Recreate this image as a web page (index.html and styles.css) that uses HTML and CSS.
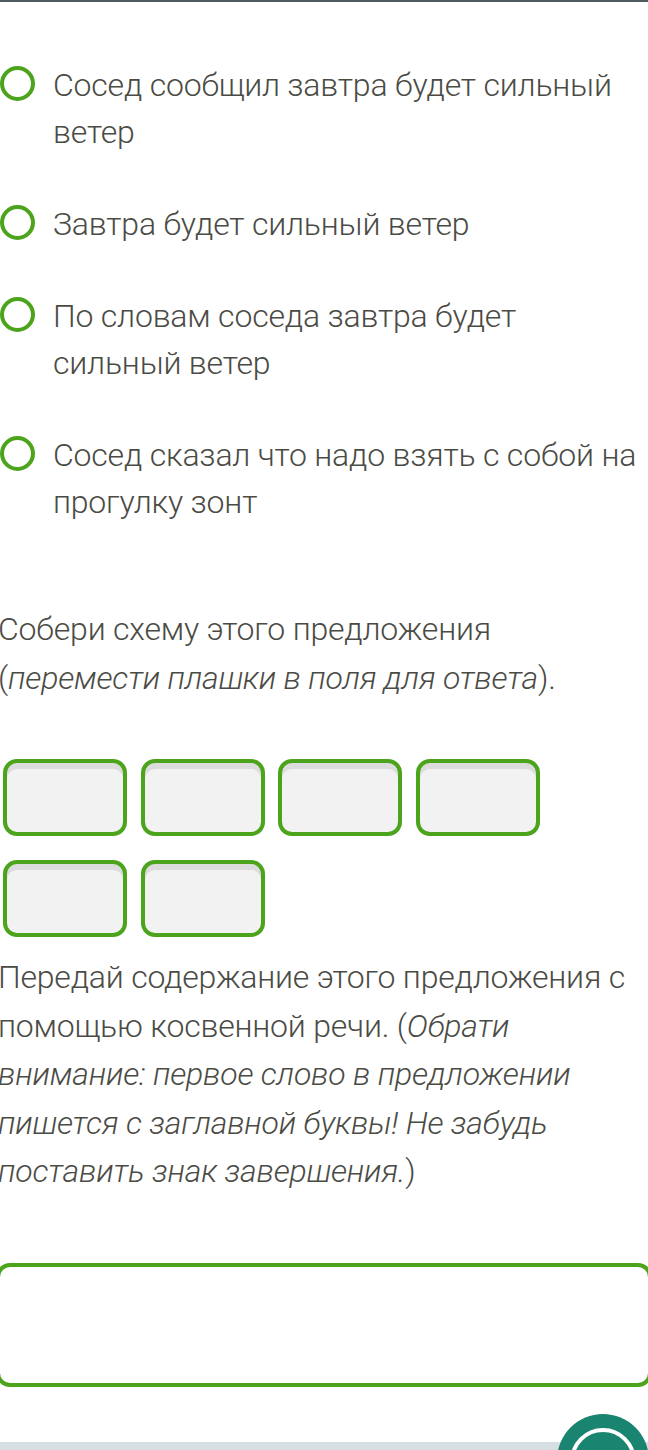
FILE: index.html
```html
<!DOCTYPE html>
<html lang="ru">
<head>
  <meta charset="UTF-8">
  <meta name="viewport" content="width=device-width, initial-scale=1.0">
  <title>Задание</title>
  <link rel="stylesheet" href="styles.css">
</head>
<body>
  <div class="topbar"></div>

  <div class="task">
    <ul class="options">
      <li class="option"><span class="radio"></span><span class="label">Сосед сообщил завтра будет сильный ветер</span></li>
      <li class="option"><span class="radio"></span><span class="label">Завтра будет сильный ветер</span></li>
      <li class="option"><span class="radio"></span><span class="label">По словам соседа завтра будет сильный ветер</span></li>
      <li class="option"><span class="radio"></span><span class="label">Сосед сказал что надо взять с собой на прогулку зонт</span></li>
    </ul>

    <p class="question">Собери схему этого предложения (<em>перемести плашки в поля для ответа</em>).</p>

    <div class="slots">
      <div class="slot"></div>
      <div class="slot"></div>
      <div class="slot"></div>
      <div class="slot"></div>
      <div class="slot"></div>
      <div class="slot"></div>
    </div>

    <p class="question">Передай содержание этого предложения с помощью косвенной речи. (<em>Обрати внимание: первое слово в предложении пишется с заглавной буквы! Не забудь поставить знак завершения.</em>)</p>

    <div class="answer"></div>
  </div>

  <div class="footer">
    <button class="fab"><span class="fab-ring"></span></button>
  </div>
</body>
</html>
```

FILE: styles.css
```css
body {
  margin: 0;
  padding: 0;
  font-family: Roboto, "Noto Sans", sans-serif;
  font-weight: 300;
  color: #4b4b45;
  background-color: #fff;
  overflow: hidden;
}

.topbar {
  height: 2px;
  background-color: #4f5b5f;
}

.task {
  margin-left: -2px;
  padding-top: 60px;
  letter-spacing: -0.2px;
}

.options {
  list-style: none;
  margin: 0;
  padding: 0 0 0 2px;
  display: flex;
  flex-direction: column;
  gap: 45px;
}

.option {
  display: flex;
  align-items: flex-start;
  gap: 18px;
  font-size: 32px;
  line-height: 47px;
}

.radio {
  flex: 0 0 auto;
  width: 27px;
  height: 27px;
  border: 4px solid #4ca41d;
  border-radius: 50%;
  margin-top: 4px;
  background: #fff;
}

.question {
  margin: 79px 0 0;
  font-size: 32px;
  line-height: 48.5px;
}

.question em {
  font-style: italic;
}

.slots {
  display: grid;
  grid-template-columns: repeat(4, 124px);
  column-gap: 13.5px;
  row-gap: 24px;
  margin: 57px 0 0 5px;
}

.slot {
  height: 69px;
  border: 4px solid #4ca41d;
  border-radius: 14px;
  background-color: #f2f2f2;
  box-shadow: inset 0 6px 0 #dcdcdc;
}

.slots + .question {
  margin-top: 16px;
}

.answer {
  height: 116px;
  margin: 67px -4px 0 -2px;
  border: 4px solid #4ca41d;
  border-radius: 14px;
  background-color: #fff;
}

.footer {
  position: relative;
  margin-top: 55px;
  height: 40px;
  background-color: #d6e0e4;
}

.fab {
  position: absolute;
  right: -1px;
  top: -28px;
  width: 92px;
  height: 92px;
  border: none;
  border-radius: 50%;
  background-color: #198571;
  padding: 0;
  display: flex;
  justify-content: center;
}

.fab-ring {
  margin-top: 14px;
  width: 58px;
  height: 58px;
  border: 4px solid #fff;
  border-radius: 50%;
}
```
